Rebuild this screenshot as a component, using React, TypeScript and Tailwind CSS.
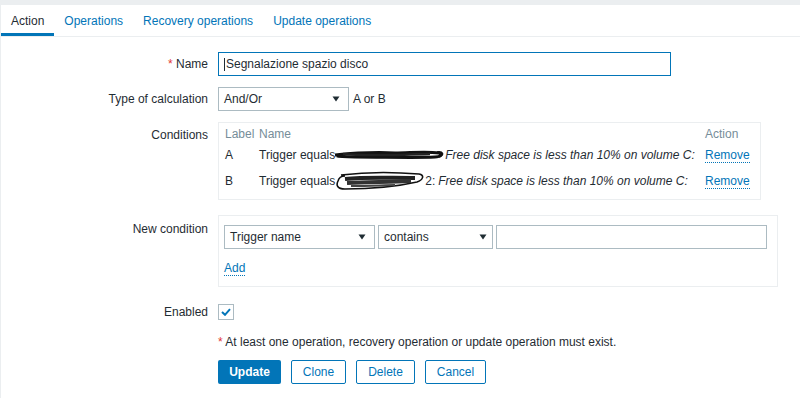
import React from "react";

const Arrow = () => (
  <svg width="8" height="6" viewBox="0 0 8 6" className="shrink-0">
    <path d="M0.5 0.5 L7.5 0.5 L4 5.5 Z" fill="#1f2c33" />
  </svg>
);

const ScribbleA = () => (
  <svg width="110" height="14" viewBox="0 0 110 14" className="inline-block align-middle">
    <path d="M0 7 C20 5 40 4 60 5 C75 5 90 3 104 5 C108 6 106 9 100 9 C80 10 50 9 20 9 C10 9 4 9 2 8" stroke="#111" strokeWidth="3" fill="none" />
    <path d="M8 6 C30 8 60 7 95 6" stroke="#222" strokeWidth="2.5" fill="none" />
    <path d="M102 4 C108 3 110 7 104 9" stroke="#111" strokeWidth="1.5" fill="none" />
  </svg>
);

const ScribbleB = () => (
  <svg width="90" height="20" viewBox="0 0 90 20" className="inline-block align-middle">
    <path d="M6 4 C30 1 60 1 84 3 C90 4 88 9 82 11 C60 16 30 18 10 18 C2 18 1 14 3 10 C4 6 6 5 10 5" stroke="#111" strokeWidth="1.6" fill="none" />
    <path d="M10 8 C30 6 50 7 80 7" stroke="#222" strokeWidth="4" fill="none" />
    <path d="M12 12 C35 11 55 11 76 10" stroke="#333" strokeWidth="4" fill="none" />
    <path d="M16 15 C35 15 50 14 60 14" stroke="#444" strokeWidth="2" fill="none" />
  </svg>
);

const Link = ({ children }: { children: React.ReactNode }) => (
  <span className="text-[#0275b8] border-b border-dotted border-[#0275b8] leading-[14px]">{children}</span>
);

export default function App() {
  return (
    <div className="w-[800px] h-[398px] bg-white overflow-hidden font-['Liberation_Sans',Arial,sans-serif] text-[12px] text-[#1f2c33]">
      <div className="h-[5px] bg-[#ebeef0]" />
      <div className="border-l border-[#ebeef0] h-[393px]">
        <div className="flex h-[32px] border-b border-[#ebeef0]">
          <div className="px-[10px] flex items-center border-b-[3px] border-[#0275b8] pt-[3px]">Action</div>
          <div className="px-[10px] flex items-center text-[#0275b8]">Operations</div>
          <div className="px-[10px] flex items-center text-[#0275b8]">Recovery operations</div>
          <div className="px-[10px] flex items-center text-[#0275b8]">Update operations</div>
        </div>

        <div className="pt-[15px]">
          {/* Name */}
          <div className="flex items-center h-[24px]">
            <div className="w-[207px] text-right">
              <span className="text-[#e33734]">*</span> Name
            </div>
            <div className="ml-[10px] w-[453px] h-[24px] border border-[#0275b8] flex items-center px-[5px]">
              <span className="w-px h-[13px] bg-[#1f2c33] mr-[1px]" />
              Segnalazione spazio disco
            </div>
          </div>

          {/* Type of calculation */}
          <div className="flex items-center h-[24px] mt-[11px]">
            <div className="w-[207px] text-right">Type of calculation</div>
            <div className="ml-[10px] w-[131px] h-[24px] border border-[#acbbc2] flex items-center justify-between pl-[5px] pr-[8px]">
              <span>And/Or</span>
              <Arrow />
            </div>
            <span className="ml-[4px]">A or B</span>
          </div>

          {/* Conditions */}
          <div className="flex mt-[11px]">
            <div className="w-[207px] text-right pt-[4px]">Conditions</div>
            <div className="ml-[10px] w-[543px] h-[78px] border border-[#ebeef0] px-[6px]">
              <div className="flex h-[22px] items-center text-[#768d99]">
                <div className="w-[34px]">Label</div>
                <div className="w-[446px]">Name</div>
                <div>Action</div>
              </div>
              <div className="flex h-[20px] items-center whitespace-nowrap">
                <div className="w-[34px]">A</div>
                <div className="w-[446px] flex items-center">
                  <span>Trigger equals</span>
                  <ScribbleA />
                  <span className="italic">Free disk space is less than 10% on volume C:</span>
                </div>
                <div><Link>Remove</Link></div>
              </div>
              <div className="flex h-[20px] mt-[6px] items-center whitespace-nowrap">
                <div className="w-[34px]">B</div>
                <div className="w-[446px] flex items-center">
                  <span>Trigger equals</span>
                  <ScribbleB />
                  <span>2:</span>
                  <span className="italic ml-[3px]">Free disk space is less than 10% on volume C:</span>
                </div>
                <div><Link>Remove</Link></div>
              </div>
            </div>
          </div>

          {/* New condition */}
          <div className="flex mt-[15px]">
            <div className="w-[207px] text-right pt-[5px]">New condition</div>
            <div className="ml-[10px] w-[560px] h-[72px] border border-[#ebeef0] px-[5px] pt-[9px]">
              <div className="flex gap-[3px]">
                <div className="w-[151px] h-[24px] border border-[#acbbc2] flex items-center justify-between pl-[5px] pr-[8px]">
                  <span>Trigger name</span>
                  <Arrow />
                </div>
                <div className="w-[115px] h-[24px] border border-[#acbbc2] flex items-center justify-between pl-[5px] pr-[5px]">
                  <span>contains</span>
                  <Arrow />
                </div>
                <div className="w-[271px] h-[24px] border border-[#acbbc2]" />
              </div>
              <div className="mt-[12px] h-[14px] flex items-center">
                <Link>Add</Link>
              </div>
            </div>
          </div>

          {/* Enabled */}
          <div className="flex items-center mt-[17px] h-[16px]">
            <div className="w-[207px] text-right">Enabled</div>
            <div className="ml-[10px] w-[16px] h-[16px] border border-[#acbbc2] flex items-center justify-center">
              <svg width="10" height="8" viewBox="0 0 10 8">
                <path d="M1 4 L4 6.8 L9 1.2" stroke="#0275b8" strokeWidth="2" fill="none" />
              </svg>
            </div>
          </div>

          {/* Warning */}
          <div className="ml-[217px] mt-[15px] h-[14px] leading-[14px]">
            <span className="text-[#e33734]">*</span> At least one operation, recovery operation or update operation must exist.
          </div>

          {/* Buttons */}
          <div className="ml-[217px] mt-[11px] flex gap-[10px]">
            <button className="h-[24px] w-[63px] rounded-[2px] bg-[#0275b8] text-white font-bold">Update</button>
            <button className="h-[24px] w-[55px] rounded-[2px] border border-[#0275b8] text-[#0275b8]">Clone</button>
            <button className="h-[24px] w-[59px] rounded-[2px] border border-[#0275b8] text-[#0275b8]">Delete</button>
            <button className="h-[24px] w-[61px] rounded-[2px] border border-[#0275b8] text-[#0275b8]">Cancel</button>
          </div>
        </div>
      </div>
    </div>
  );
}
